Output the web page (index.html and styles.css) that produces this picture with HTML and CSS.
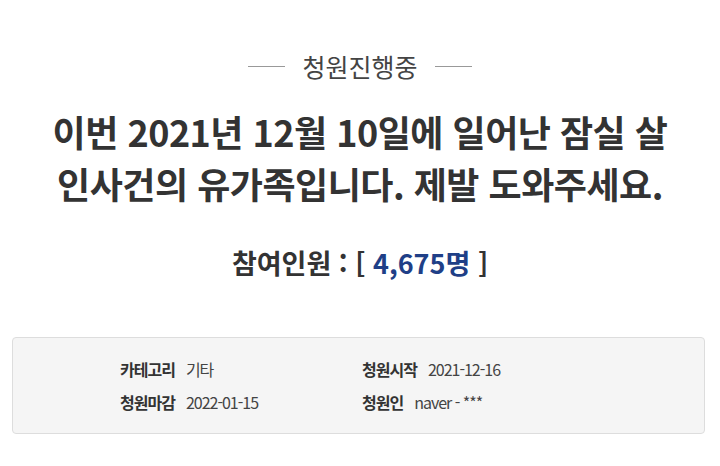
FILE: index.html
```html
<!DOCTYPE html>
<html lang="ko">
<head>
<meta charset="utf-8">
<link rel="stylesheet" href="styles.css">
</head>
<body>
<div class="page">
  <div class="status"><span class="line"></span><span class="status-text">청원진행중</span><span class="line"></span></div>
  <h1 class="title">이번 2021년 12월 10일에 일어난 잠실 살<br>인사건의 유가족입니다. 제발 도와주세요.</h1>
  <div class="count">참여인원 : [ <span class="num">4,675명</span> ]</div>
  <div class="info">
    <div class="info-grid">
      <div class="item"><span class="label">카테고리</span><span class="value">기타</span></div>
      <div class="item"><span class="label">청원시작</span><span class="value">2021-12-16</span></div>
      <div class="item"><span class="label">청원마감</span><span class="value">2022-01-15</span></div>
      <div class="item"><span class="label">청원인</span><span class="value">naver - ***</span></div>
    </div>
  </div>
</div>
</body>
</html>
```
FILE: styles.css
```css
* { box-sizing: border-box; }
html, body { margin: 0; padding: 0; background: #fff; }
body { font-family: "Noto Sans CJK KR", "Noto Sans", sans-serif; color: #333; }
.page { width: 720px; padding: 44px 15px 0 12px; }
.status { display: flex; align-items: center; justify-content: center; gap: 17px; height: 44px; padding-left: 3px; }
.line { width: 37px; height: 1px; background: #999; }
.status-text { font-size: 25px; color: #444; line-height: 1; }
.title { margin: 17px 0 0 0; padding-left: 3px; text-align: center; font-size: 36px; font-weight: 700; line-height: 52px; letter-spacing: -0.5px; color: #333; }
.count { margin-top: 36px; padding-left: 3px; text-align: center; font-size: 27px; font-weight: 700; line-height: 36px; color: #333; }
.num { color: #1f3f87; }
.info { margin-top: 56px; height: 97px; background: #f5f5f5; border: 1px solid #ddd; border-radius: 4px; padding: 20px 0 0 107px; }
.info-grid { display: grid; grid-template-columns: 242px 1fr; row-gap: 10px; }
.item { display: flex; align-items: center; gap: 11px; font-size: 16px; line-height: 23px; letter-spacing: -1px; }
.label { font-weight: 700; color: #333; }
.value { color: #444; }
```
